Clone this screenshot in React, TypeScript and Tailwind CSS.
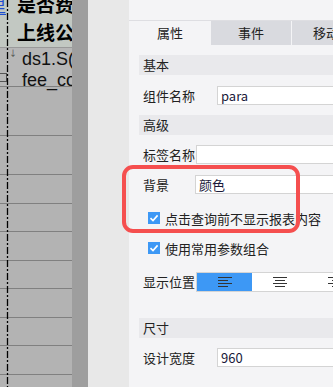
import React from 'react';

const font = { fontFamily: '"Noto Sans CJK SC", "Noto Sans", sans-serif' };

function Check({ label }: { label: string }) {
  return (
    <div className="flex items-center h-[16px] pl-[9px] gap-[5px]">
      <span className="w-[12px] h-[12px] bg-[#3d98f5] flex items-center justify-center">
        <svg width="10" height="10" viewBox="0 0 10 10">
          <path d="M1.5 5.2 L4 7.6 L8.6 2.4" fill="none" stroke="#fff" strokeWidth="1.6" />
        </svg>
      </span>
      <span className="text-[13px] text-[#222] leading-none">{label}</span>
    </div>
  );
}

function AlignIcon({ mode }: { mode: 'left' | 'center' | 'right' }) {
  const full = [0, 14];
  const short = mode === 'left' ? [0, 10] : mode === 'center' ? [2, 12] : [4, 14];
  const rows = [full, short, full, short];
  return (
    <svg width="14" height="12" viewBox="0 0 14 12">
      {rows.map((r, i) => (
        <line key={i} x1={r[0]} x2={r[1]} y1={1.5 + i * 3} y2={1.5 + i * 3} stroke="#333" strokeWidth="1" />
      ))}
    </svg>
  );
}

function Section({ title, top }: { title: string; top: string }) {
  return (
    <div className={`${top} h-[20px] bg-[#e9e9ec] flex items-center pl-[4px] text-[13px] text-[#222]`}>
      {title}
    </div>
  );
}

function Field({ label, value, inputLeft, top }: { label: string; value: string; inputLeft: string; top: string }) {
  return (
    <div className={`${top} flex items-center h-[19px]`}>
      <span className={`${inputLeft} shrink-0 pl-[4px] text-[13px] text-[#222]`}>{label}</span>
      <div className="flex-1 h-full bg-white border border-[#d4d4d4] border-r-0 flex items-center pl-[3px] text-[13px] text-[#1a1a3a]">
        {value}
      </div>
    </div>
  );
}

export default function App() {
  const rowHeights = [49, 39, 29, 28, 29, 28, 29, 28, 29, 28];
  return (
    <div className="relative w-[333px] h-[387px] overflow-hidden flex bg-[#f4f4f6]" style={font}>
      {/* sheet canvas */}
      <div className="relative w-[72px] shrink-0 bg-[#b3b3b3] overflow-hidden">
        <div className="h-[48px] bg-[#c2c8c2] border-b border-[#9a9a9a] relative">
          <div className="absolute left-[17px] top-[-10px] font-bold text-[19px] leading-[28px] text-black whitespace-nowrap">
            <div>是否费</div>
            <div>上线公</div>
          </div>
          <div className="absolute left-[-11px] top-[-4px] text-[17px] text-[#1f4fd0] leading-[18px] border-b border-[#1f4fd0]">
            里
          </div>
        </div>
        <div className="h-[39px] border-b border-[#808080] bg-[#b7b7b7] relative">
          <div
            className="absolute left-[22px] top-[1px] text-[18px] leading-[21px] text-[#111] whitespace-nowrap"
            style={{ fontFamily: '"Liberation Sans", sans-serif' }}
          >
            <div>ds1.S(</div>
            <div>fee_co</div>
          </div>
          <div className="absolute left-[-1px] top-[25px] w-[8px] h-[9px] border border-[#555]" />
          <div className="absolute left-[9px] top-[1px] text-[8px] leading-none text-[#444]">↓</div>
        </div>
        {rowHeights.map((h, i) => (
          <div key={i} className="border-b border-[#808080]" style={{ height: h }} />
        ))}
        <svg className="absolute left-[6px] top-0" width="3" height="387">
          <line x1="1.5" x2="1.5" y1="0" y2="387" stroke="#000" strokeWidth="1.3" strokeDasharray="7 2 2 2" />
        </svg>
      </div>
      <div className="w-[16px] shrink-0 bg-[#9e9e9e]" />
      <div className="w-[41px] shrink-0 bg-[#e8e8e8]" />

      {/* property panel */}
      <div className="flex-1 min-w-0 flex flex-col bg-[#f4f4f6]">
        <div className="h-[20px]" />
        <div className="flex h-[25px] border-t border-[#dedee2] text-[13px] text-[#222]">
          <div className="w-[82px] shrink-0 flex items-center justify-center">属性</div>
          <div className="w-[81px] shrink-0 flex items-center justify-center bg-[#d9dadf] border-r border-[#f4f4f6]">事件</div>
          <div className="w-[81px] shrink-0 flex items-center justify-center bg-[#d9dadf]">移动端</div>
        </div>
        <div className="pl-[10px] flex flex-col">
          <Section title="基本" top="mt-[10px]" />
          <Field label="组件名称" value="para" inputLeft="w-[78px]" top="mt-[11px]" />
          <Section title="高级" top="mt-[10px]" />
          <Field label="标签名称" value="" inputLeft="w-[57px]" top="mt-[10px]" />
          <Field label="背景" value="颜色" inputLeft="w-[56px]" top="mt-[11px]" />
          <div className="mt-[16px]">
            <Check label="点击查询前不显示报表内容" />
          </div>
          <div className="mt-[14px]">
            <Check label="使用常用参数组合" />
          </div>
          <div className="mt-[16px] flex items-center h-[20px]">
            <span className="w-[57px] shrink-0 pl-[4px] text-[13px] text-[#222]">显示位置</span>
            <div className="flex h-full border border-[#d4d4d4] border-r-0">
              <div className="w-[55px] shrink-0 bg-[#3d98f5] flex items-center justify-center">
                <AlignIcon mode="left" />
              </div>
              <div className="w-[55px] shrink-0 bg-white flex items-center justify-center">
                <AlignIcon mode="center" />
              </div>
              <div className="w-[55px] shrink-0 bg-white flex items-center justify-center">
                <AlignIcon mode="right" />
              </div>
            </div>
          </div>
          <Section title="尺寸" top="mt-[26px]" />
          <Field label="设计宽度" value="960" inputLeft="w-[78px]" top="mt-[10px]" />
        </div>
      </div>

      {/* highlight frame */}
      <div className="absolute left-[122px] top-[165px] w-[178px] h-[68px] border-[4px] border-[#f54f4f] rounded-[11px] pointer-events-none" />
    </div>
  );
}
